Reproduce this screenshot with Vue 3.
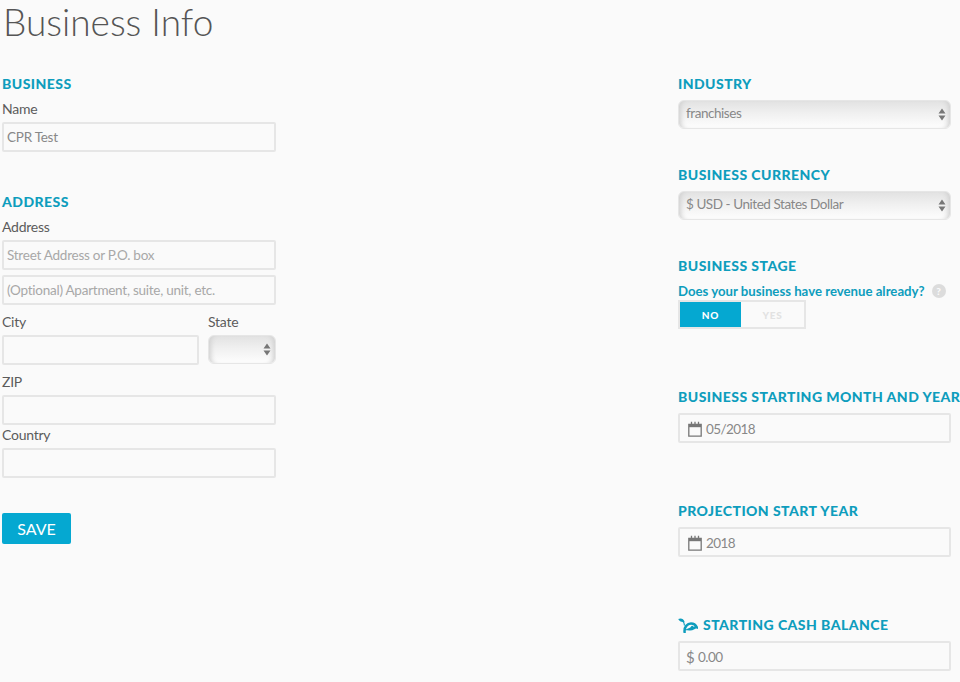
<template>
  <div class="page">
    <h1 class="title">Business Info</h1>
    <div class="columns">
      <form class="col col-left" @submit.prevent>
        <h2 class="heading first">BUSINESS</h2>
        <label class="label">Name</label>
        <input class="field" type="text" value="CPR Test" />

        <h2 class="heading address">ADDRESS</h2>
        <label class="label">Address</label>
        <input class="field" type="text" placeholder="Street Address or P.O. box" />
        <input class="field second" type="text" placeholder="(Optional) Apartment, suite, unit, etc." />

        <div class="city-row">
          <div class="city">
            <label class="label">City</label>
            <input class="field" type="text" />
          </div>
          <div class="state">
            <label class="label">State</label>
            <div class="select-wrap">
              <select class="select"><option></option></select>
              <svg class="arrows" width="8" height="13" viewBox="0 0 8 13"><path d="M4 0.5 L7.5 5.5 H0.5 Z M0.5 7.5 H7.5 L4 12.5 Z" fill="#777" /></svg>
            </div>
          </div>
        </div>

        <label class="label">ZIP</label>
        <input class="field" type="text" />
        <label class="label country">Country</label>
        <input class="field" type="text" />

        <button class="save" type="submit">SAVE</button>
      </form>

      <form class="col col-right" @submit.prevent>
        <h2 class="heading first">INDUSTRY</h2>
        <div class="select-wrap after-heading">
          <select class="select"><option>franchises</option></select>
          <svg class="arrows" width="8" height="13" viewBox="0 0 8 13"><path d="M4 0.5 L7.5 5.5 H0.5 Z M0.5 7.5 H7.5 L4 12.5 Z" fill="#777" /></svg>
        </div>

        <h2 class="heading currency">BUSINESS CURRENCY</h2>
        <div class="select-wrap after-heading">
          <select class="select"><option>$ USD - United States Dollar</option></select>
          <svg class="arrows" width="8" height="13" viewBox="0 0 8 13"><path d="M4 0.5 L7.5 5.5 H0.5 Z M0.5 7.5 H7.5 L4 12.5 Z" fill="#777" /></svg>
        </div>

        <h2 class="heading currency">BUSINESS STAGE</h2>
        <div class="question">
          <span>Does your business have revenue already?</span>
          <span class="help">?</span>
        </div>
        <div class="toggle">
          <span class="opt on">NO</span>
          <span class="opt off">YES</span>
        </div>

        <h2 class="heading later">BUSINESS STARTING MONTH AND YEAR</h2>
        <div class="field icon-field after-heading">
          <svg width="14" height="16" viewBox="0 0 14 16" fill="none"><path d="M0.8 3.5 H13.2 V15.2 H0.8 Z" stroke="#777" stroke-width="1.3" /><rect x="1" y="3" width="12" height="3.2" fill="#777" /><path d="M3.5 0.8 V3.5 M7 0.8 V3.5 M10.5 0.8 V3.5" stroke="#777" stroke-width="1.3" /></svg>
          <span>05/2018</span>
        </div>

        <h2 class="heading later">PROJECTION START YEAR</h2>
        <div class="field icon-field after-heading">
          <svg width="14" height="16" viewBox="0 0 14 16" fill="none"><path d="M0.8 3.5 H13.2 V15.2 H0.8 Z" stroke="#777" stroke-width="1.3" /><rect x="1" y="3" width="12" height="3.2" fill="#777" /><path d="M3.5 0.8 V3.5 M7 0.8 V3.5 M10.5 0.8 V3.5" stroke="#777" stroke-width="1.3" /></svg>
          <span>2018</span>
        </div>

        <h2 class="heading later sprout-heading">
          <svg width="20" height="15" viewBox="0 0 20 15" fill="none">
            <path d="M0.2 1 C2.8 -0.3 5.6 0.6 6.6 3.8 C3.8 4.6 1.4 3.4 0.2 1 Z" fill="#0e9dbd" />
            <path d="M4.5 2.5 C6 4 6.5 5.5 6.5 7.5" stroke="#0e9dbd" stroke-width="1.2" />
            <path d="M6.6 14.2 C6 8.8 9.4 5.6 13 5.6 C16 5.6 17.8 7.4 18.8 9.4 C16.2 8.6 15.4 11.6 11.6 11.2 C13 10.6 13.8 9.8 14.2 9" stroke="#0e9dbd" stroke-width="2.5" stroke-linecap="round" />
          </svg>
          <span>STARTING CASH BALANCE</span>
        </h2>
        <div class="field icon-field after-heading money">
          <span class="dollar">$</span>
          <span>0.00</span>
        </div>
      </form>
    </div>
  </div>
</template>

<script setup>
</script>

<style>
html, body {
  margin: 0;
  background: #fafafa;
}
</style>

<style scoped>
.page {
  height: 682px;
  overflow: hidden;
  background: #fafafa;
  font-family: Lato, 'Open Sans', sans-serif;
  color: #555;
}

.title {
  margin: 0;
  padding: 0 0 0 3px;
  height: 44px;
  font-size: 37px;
  font-weight: 300;
  line-height: 44px;
  color: #555;
}

.columns {
  display: flex;
  justify-content: space-between;
  padding: 0 9px 0 2px;
}

.col {
  display: flex;
  flex-direction: column;
}

.col-left {
  width: 274px;
}

.col-right {
  width: 273px;
}

.heading {
  margin: 0;
  height: 16px;
  font-family: Lato, sans-serif;
  font-size: 14px;
  font-weight: 900;
  line-height: 16px;
  letter-spacing: 0.45px;
  color: #0e9dbd;
  white-space: nowrap;
}

.heading.first {
  margin-top: 32px;
}

.heading.address {
  margin-top: 42px;
}

.heading.currency {
  margin-top: 38px;
}

.heading.later {
  margin-top: 60px;
}

.label {
  display: block;
  height: 20px;
  margin-top: 7px;
  margin-bottom: 3px;
  font-size: 14px;
  line-height: 20px;
  letter-spacing: -0.25px;
  color: #5c5c5c;
}

.label.country {
  margin-top: 0;
}

.field {
  box-sizing: border-box;
  width: 100%;
  height: 30px;
  padding: 0 3px;
  border: 2px solid #e6e6e6;
  border-radius: 2px;
  background: #fafafa;
  font-family: inherit;
  font-size: 13.5px;
  letter-spacing: -0.25px;
  color: #888;
  outline: none;
}

.field::placeholder {
  color: #a8a8a8;
  opacity: 1;
}

.field.second {
  margin-top: 5px;
}

.city-row {
  display: flex;
  justify-content: space-between;
}

.city {
  width: 197px;
}

.state {
  width: 68px;
}

.select-wrap {
  position: relative;
  height: 29px;
}

.after-heading {
  margin-top: 8px;
}

.select {
  appearance: none;
  box-sizing: border-box;
  display: block;
  width: 100%;
  height: 29px;
  padding: 0 20px 3px 7px;
  border: 1px solid #e6e6e6;
  border-radius: 6px;
  background: linear-gradient(to bottom, #e2e2e2 0%, #f0f0f0 45%, #fbfbfb 90%);
  box-shadow: inset 6px 0 5px -4px #d0d0d0, inset -6px 0 5px -4px #d0d0d0;
  font-family: inherit;
  font-size: 13.5px;
  letter-spacing: -0.45px;
  color: #888;
  outline: none;
}

.arrows {
  position: absolute;
  right: 5px;
  top: 8px;
}

.question {
  display: flex;
  align-items: center;
  gap: 7px;
  height: 18px;
  margin-top: 8px;
  font-size: 13.2px;
  font-weight: 700;
  color: #0e9dbd;
  white-space: nowrap;
}

.help {
  width: 14px;
  height: 14px;
  border-radius: 50%;
  background: #dcdcdc;
  color: #fafafa;
  font-size: 10px;
  font-weight: 900;
  line-height: 14px;
  text-align: center;
}

.toggle {
  box-sizing: border-box;
  display: flex;
  width: 128px;
  height: 29px;
  border: 2px solid #e6e6e6;
  background: #fafafa;
}

.opt {
  display: flex;
  align-items: center;
  justify-content: center;
  font-family: Lato, sans-serif;
  font-size: 10px;
  font-weight: 900;
  letter-spacing: 0.8px;
}

.opt.on {
  width: 61px;
  background: #05a8d1;
  color: #fff;
}

.opt.off {
  flex: 1;
  color: #e2e2e2;
}

.icon-field {
  display: flex;
  align-items: center;
  gap: 4px;
  padding: 1px 0 0 8px;
  letter-spacing: -0.6px;
}

.money {
  gap: 4px;
  padding-left: 6px;
}

.dollar {
  font-size: 15px;
}

.sprout-heading {
  display: flex;
  align-items: center;
  gap: 5px;
}

.save {
  width: 69px;
  height: 31px;
  margin-top: 35px;
  padding: 0;
  border: none;
  border-radius: 2px;
  background: #05a8d1;
  color: #fff;
  font-family: inherit;
  font-size: 16px;
}
</style>
